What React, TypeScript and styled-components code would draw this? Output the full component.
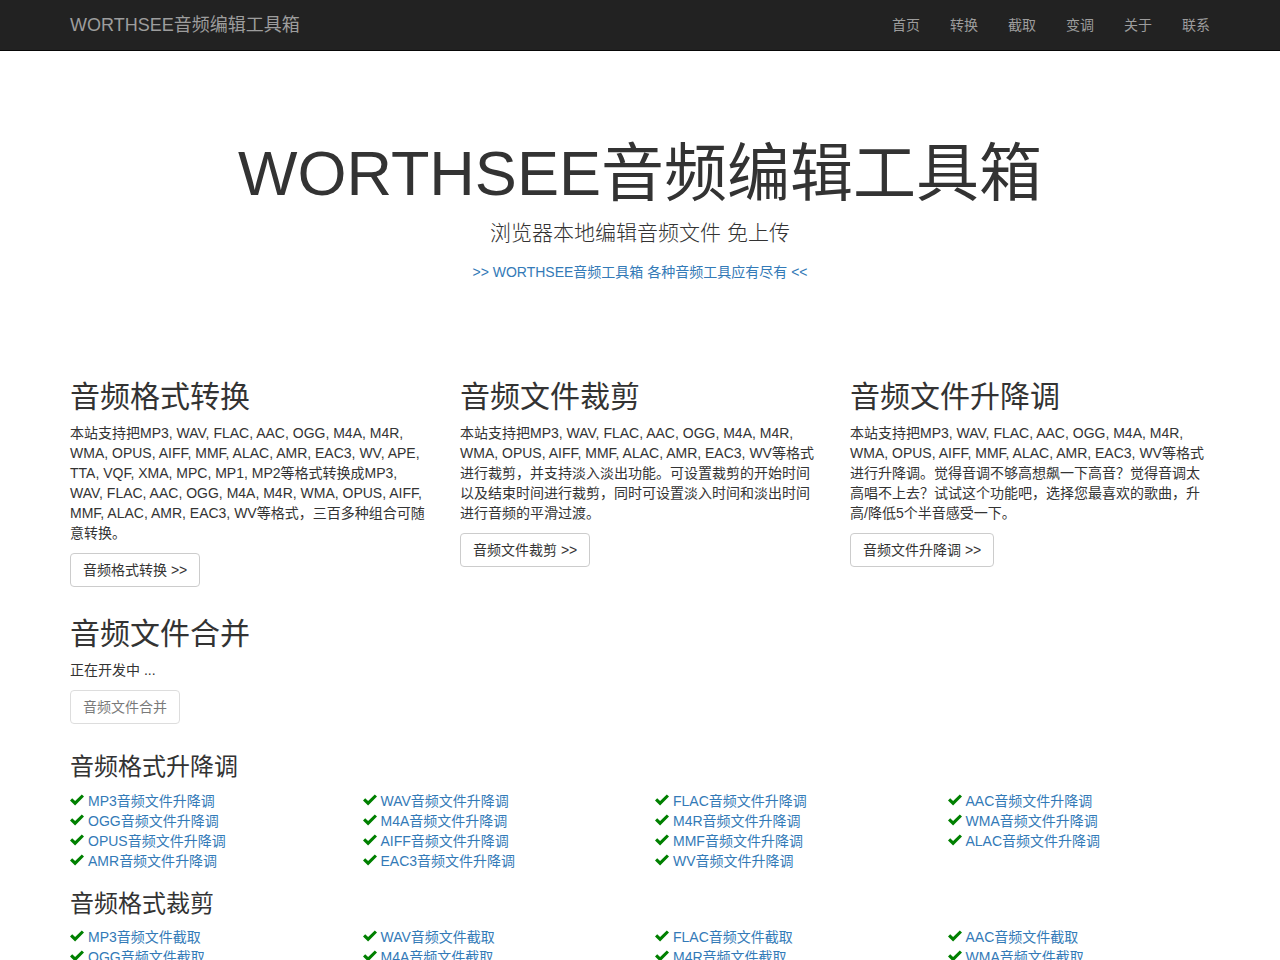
import React from 'react'
import styled, { createGlobalStyle } from 'styled-components'

const GlobalStyle = createGlobalStyle`
  * { box-sizing: border-box; }
  html, body { margin: 0; padding: 0; background: #fff; }
  body {
    font-family: "Liberation Sans", "Noto Sans CJK SC", sans-serif;
    font-size: 14px;
    line-height: 1.42857143;
    color: #333;
  }
  a { color: #337ab7; text-decoration: none; }
`

const Navbar = styled.nav`
  background: #222;
  border-bottom: 1px solid #080808;
  height: 51px;
`

const Container = styled.div`
  width: 1170px;
  margin: 0 auto;
  padding: 0 15px;
`

const NavInner = styled(Container)`
  display: flex;
  align-items: center;
  justify-content: space-between;
  height: 50px;
`

const Brand = styled.a`
  color: #9d9d9d;
  font-size: 18px;
  line-height: 20px;
`

const NavList = styled.ul`
  display: flex;
  list-style: none;
  margin: 0 -15px 0 0;
  padding: 0;
`

const NavLink = styled.a`
  display: block;
  padding: 15px;
  line-height: 20px;
  color: #9d9d9d;
`

const Hero = styled.section`
  text-align: center;
  padding: 88px 0 78px;
`

const HeroTitle = styled.h1`
  font-size: 63px;
  font-weight: 400;
  line-height: 1.1;
  margin: 0 0 10px;
`

const HeroLead = styled.p`
  font-size: 21px;
  font-weight: 200;
  line-height: 30px;
  margin: 0 0 14px;
`

const HeroLink = styled.p`
  margin: 0;
`

const Row = styled.div<{ cols: number }>`
  display: grid;
  grid-template-columns: repeat(${p => p.cols}, 1fr);
  margin: 0 -15px;
`

const Col = styled.div`
  padding: 0 15px;
`

const H2 = styled.h2`
  font-size: 30px;
  font-weight: 400;
  line-height: 1.1;
  margin: 20px 0 10px;
`

const H3 = styled.h3`
  font-size: 24px;
  font-weight: 400;
  line-height: 1.1;
  margin: 20px 0 10px;
`

const Para = styled.p`
  margin: 0 0 10px;
`

const Button = styled.a<{ disabled?: boolean }>`
  display: inline-block;
  padding: 6px 12px;
  font-size: 14px;
  line-height: 20px;
  color: #333;
  background: #fff;
  border: 1px solid #ccc;
  border-radius: 4px;
  opacity: ${p => (p.disabled ? 0.65 : 1)};
  cursor: ${p => (p.disabled ? 'not-allowed' : 'pointer')};
`

const Item = styled.div`
  padding: 0 15px;
  line-height: 20px;
  white-space: nowrap;
`

const Check = styled.svg`
  width: 14px;
  height: 14px;
  vertical-align: -1px;
  margin-right: 4px;
`

const OkIcon = () => (
  <Check viewBox="0 0 14 14">
    <path d="M0 7.4 L2.2 5.2 L5.1 8.1 L11.8 1.4 L14 3.6 L5.1 12.6 Z" fill="#008000" />
  </Check>
)

const formats = ['MP3', 'WAV', 'FLAC', 'AAC', 'OGG', 'M4A', 'M4R', 'WMA', 'OPUS', 'AIFF', 'MMF', 'ALAC', 'AMR', 'EAC3', 'WV']

const features = [
  {
    title: '音频格式转换',
    text: '本站支持把MP3, WAV, FLAC, AAC, OGG, M4A, M4R, WMA, OPUS, AIFF, MMF, ALAC, AMR, EAC3, WV, APE, TTA, VQF, XMA, MPC, MP1, MP2等格式转换成MP3, WAV, FLAC, AAC, OGG, M4A, M4R, WMA, OPUS, AIFF, MMF, ALAC, AMR, EAC3, WV等格式，三百多种组合可随意转换。',
    button: '音频格式转换 >>',
  },
  {
    title: '音频文件裁剪',
    text: '本站支持把MP3, WAV, FLAC, AAC, OGG, M4A, M4R, WMA, OPUS, AIFF, MMF, ALAC, AMR, EAC3, WV等格式进行裁剪，并支持淡入淡出功能。可设置裁剪的开始时间以及结束时间进行裁剪，同时可设置淡入时间和淡出时间进行音频的平滑过渡。',
    button: '音频文件裁剪 >>',
  },
  {
    title: '音频文件升降调',
    text: '本站支持把MP3, WAV, FLAC, AAC, OGG, M4A, M4R, WMA, OPUS, AIFF, MMF, ALAC, AMR, EAC3, WV等格式进行升降调。觉得音调不够高想飙一下高音？觉得音调太高唱不上去？试试这个功能吧，选择您最喜欢的歌曲，升高/降低5个半音感受一下。',
    button: '音频文件升降调 >>',
  },
]

const navItems = ['首页', '转换', '截取', '变调', '关于', '联系']

const FormatList = ({ title, suffix }: { title: string; suffix: string }) => (
  <>
    <H3>{title}</H3>
    <Row cols={4}>
      {formats.map(f => (
        <Item key={f}>
          <OkIcon />
          <a href="#">{f}音频文件{suffix}</a>
        </Item>
      ))}
    </Row>
  </>
)

export default function App() {
  return (
    <>
      <GlobalStyle />
      <Navbar>
        <NavInner>
          <Brand href="#">WORTHSEE音频编辑工具箱</Brand>
          <NavList>
            {navItems.map(n => (
              <li key={n}>
                <NavLink href="#">{n}</NavLink>
              </li>
            ))}
          </NavList>
        </NavInner>
      </Navbar>
      <Hero>
        <HeroTitle>WORTHSEE音频编辑工具箱</HeroTitle>
        <HeroLead>浏览器本地编辑音频文件 免上传</HeroLead>
        <HeroLink>
          <a href="#">&gt;&gt; WORTHSEE音频工具箱 各种音频工具应有尽有 &lt;&lt;</a>
        </HeroLink>
      </Hero>
      <Container>
        <Row cols={3}>
          {features.map(f => (
            <Col key={f.title}>
              <H2>{f.title}</H2>
              <Para>{f.text}</Para>
              <Para>
                <Button href="#">{f.button}</Button>
              </Para>
            </Col>
          ))}
        </Row>
        <Row cols={3}>
          <Col>
            <H2>音频文件合并</H2>
            <Para>正在开发中 ...</Para>
            <Para>
              <Button disabled>音频文件合并</Button>
            </Para>
          </Col>
        </Row>
        <FormatList title="音频格式升降调" suffix="升降调" />
        <FormatList title="音频格式裁剪" suffix="截取" />
      </Container>
    </>
  )
}
